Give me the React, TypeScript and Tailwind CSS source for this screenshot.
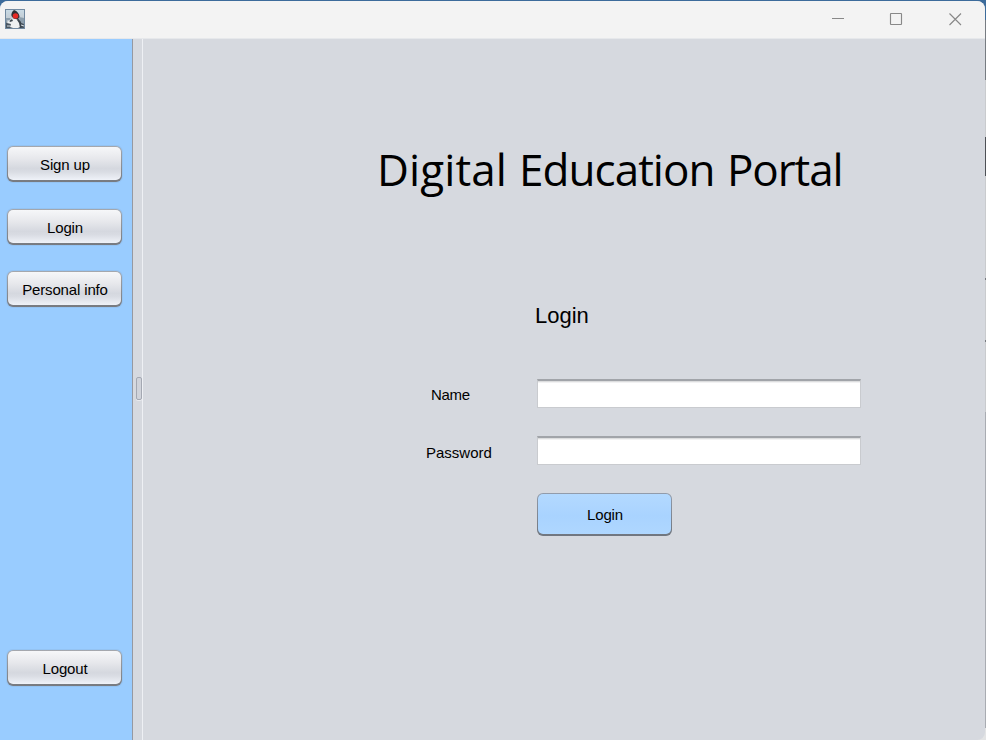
import type { ReactNode } from "react";

function SideButton({ children }: { children: ReactNode }) {
  return (
    <button
      type="button"
      className="block h-9 w-[115px] rounded-[6px] bg-linear-to-b from-[#a5a8ae] to-[#777a80] p-px pb-[2px] shadow-[0_0_0_1px_#8fb9e680]"
    >
      <span className="flex h-full items-center justify-center rounded-[5px] bg-[linear-gradient(#f6f7f9,#e7e8ec_35%,#d5d8df_65%,#d9dce3_75%,#eff2f8)] pt-[2px] pl-px tracking-[-0.15px]">
        {children}
      </span>
    </button>
  );
}

function Field({ type }: { type: string }) {
  return (
    <input
      type={type}
      className="block h-[29px] w-[324px] border border-t-2 border-[#c9cbcf] border-t-[#a1a4a9] bg-white shadow-[inset_0_1px_0_#dcddde,inset_0_2px_0_#f2f2f3] outline-none"
    />
  );
}

function JavaIcon() {
  return (
    <svg width="20" height="20" viewBox="0 0 20 20" className="block">
      <defs>
        <linearGradient id="sky" x2="0" y2="1">
          <stop stopColor="#c9dbe6" />
          <stop offset=".45" stopColor="#c3cdd4" />
          <stop offset="1" stopColor="#5c7080" />
        </linearGradient>
      </defs>
      <rect x=".5" y=".5" width="19" height="19" fill="url(#sky)" stroke="#7189a0" />
      <path d="M1 9h4l2 3-2 3H1zM14 8l5 1v5l-4-1z" fill="#8c9eac" />
      <path d="M1 14l5-2 8 1 5 2v4H1z" fill="#4a5661" />
      <path d="M7 9.5l-4 2.5-1 2 4 1-1 3 3 1h5l2-1v-6l-2-3z" fill="#eef0f1" />
      <path d="M9 1c-2 1.5-3 3.500-2.500 6l2 2.500 4 1 2-2.500c0-3-2.500-6-5.500-7z" fill="#2d3136" />
      <path d="M13 9l3 4 1 5-2 1-1-5-2-3zM7 10l-3 2 1 1 3-1z" fill="#3b454e" />
      <circle cx="10.5" cy="7" r="2.8" fill="#e52a24" />
      <path d="M2 17h3M16 16l3 1M2 12h3" stroke="#d6dde2" />
    </svg>
  );
}

export default function App() {
  return (
    <div className="relative h-[740px] w-[986px] overflow-hidden bg-[linear-gradient(#3c6b9b_0_20px,#777c82_20px_80px,#c9cbce_80px_137px,#4e5156_137px_176px,#c9cbce_176px_278px,#777a7f_278px_280px,#c9cbce_280px_340px,#777a7f_340px_342px,#c9cbce_342px_412px,#a9acb2_412px_728px,#e3e4e5_728px)] pt-px pr-px font-['Liberation_Sans',Arial,sans-serif] text-[15px] leading-[18px] text-black">
      <div className="flex h-[739px] flex-col overflow-hidden rounded-t-[8px] rounded-br-[8px] bg-[#d6d9df]">
        <header className="flex h-[38px] shrink-0 justify-between border-b border-[#e6e8eb] bg-[#f3f3f3] pl-[5px]">
          <div className="pt-2">
            <JavaIcon />
          </div>
          <div className="flex pt-[10px] pr-[22px] text-[#888]">
            <svg width="16" height="16" viewBox="0 0 16 16" fill="none" stroke="currentColor" className="mr-[42px]">
              <path d="M2 7.5h12" />
            </svg>
            <svg width="16" height="16" viewBox="0 0 16 16" fill="none" stroke="currentColor" className="mr-[43px]">
              <rect x="2.5" y="2.5" width="11" height="11" rx=".5" strokeWidth="1.15" />
            </svg>
            <svg width="16" height="16" viewBox="0 0 16 16" fill="none" stroke="currentColor" strokeWidth="1.15">
              <path d="M2.500 2.500l11.500 11.500M14 2.500l-11.500 11.500" />
            </svg>
          </div>
        </header>

        <div className="flex min-h-0 flex-1">
          <aside className="flex w-[132px] flex-col justify-between bg-[#99ccff] pt-[107px] pb-[54px] pl-[7px]">
            <nav className="flex flex-col gap-[26.5px]">
              <SideButton>Sign up</SideButton>
              <SideButton>
                <span className="pt-px">Login</span>
              </SideButton>
              <SideButton>Personal info</SideButton>
            </nav>
            <SideButton>Logout</SideButton>
          </aside>

          <div className="flex w-[11px] items-center border-l border-[#9699a1] bg-[#d6d9df] pl-[2.5px]">
            <div className="mb-[3px] h-[23px] w-[6px] shrink-0 rounded-[2px] border border-[#a4a8b2] bg-[#d0d3da] shadow-[0_1px_0_#e9ebef]" />
            <div className="ml-[0.5px] h-full w-px bg-[#eef0f4]" />
          </div>

          <main className="flex flex-1 flex-col">
            <h1 className="mt-[99px] ml-[234px] flex h-[62px] font-['Open_Sans','Noto_Sans',sans-serif] text-[44px] leading-[62px] font-normal whitespace-pre">
              <span className="w-[142px] tracking-[0.1px]">Digital </span>
              <span className="w-[208px] tracking-[-0.95px]">Education </span>
              <span className="tracking-[-1.1px]">Portal</span>
            </h1>
            <h2 className="mt-[102px] ml-[392px] h-7 text-[22px] leading-7">Login</h2>

            <form className="mt-[49px] ml-[282px]">
              <div className="flex h-[57px] items-start">
                <label className="w-[112px] pt-[7px] pl-[6px] tracking-[-0.3px]">Name</label>
                <Field type="text" />
              </div>
              <div className="flex h-[57px] items-start">
                <label className="w-[112px] pt-[8px] pl-[1px]">Password</label>
                <Field type="password" />
              </div>
              <button
                type="button"
                className="ml-[112px] block h-[43px] w-[135px] rounded-[6px] bg-linear-to-b from-[#929cab] to-[#70767f] p-px pb-[2px]"
              >
                <span className="flex h-full items-center justify-center rounded-[5px] bg-[linear-gradient(#b3d9ff,#a9d3ff_55%,#afd7ff)] pt-[2px] pl-px tracking-[-0.15px]">
                  Login
                </span>
              </button>
            </form>
          </main>
        </div>
      </div>
    </div>
  );
}
